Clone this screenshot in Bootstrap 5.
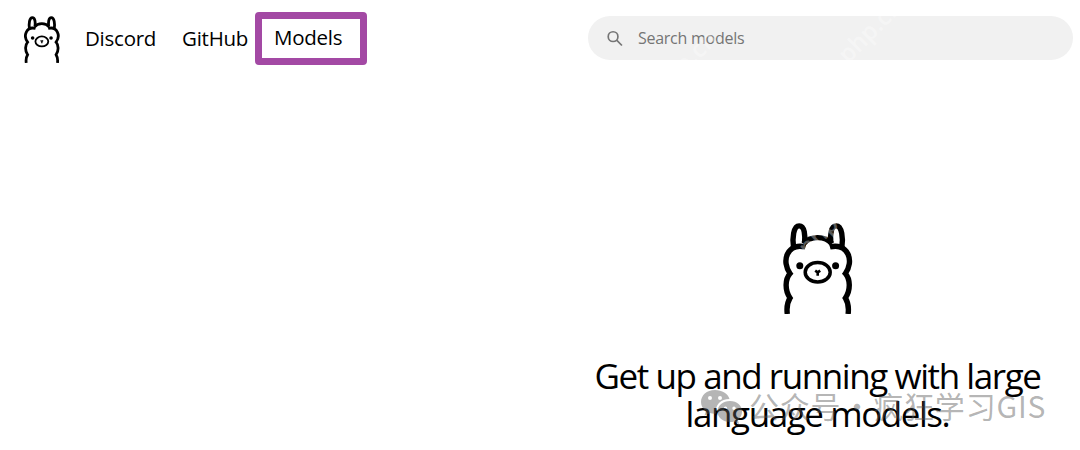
<!DOCTYPE html>
<html lang="en">
<head>
    <meta charset="UTF-8">
    <meta name="viewport" content="width=device-width, initial-scale=1">
    <title>Ollama</title>
    <link href="https://cdn.jsdelivr.net/npm/bootstrap@5.3.0/dist/css/bootstrap.min.css" rel="stylesheet">
    <style>
        body { font-family: "Open Sans", "Noto Sans CJK SC", sans-serif; color: #000; background: #fff; height: 450px; overflow: hidden; }
        .topbar { height: 76px; padding: 0 7px 0 24px; }
        .brand-logo { width: 36px; height: 47px; margin: 3px 25px 0 0; }
        .top-link { color: #000; font-size: 20.5px; line-height: 28px; letter-spacing: -.25px; white-space: nowrap; text-decoration: none; }
        .link-discord { width: 97px; margin-top: -1px; }
        .link-github { width: 73px; margin-top: -1px; }
        .link-models { width: 112px; height: 53px; margin-top: 1px; border: 7px solid #a349a4; border-radius: 4px; padding: 4px 0 0 12px; }
        .search-box { width: 485px; height: 44px; background: #f1f1f1; padding-left: 19px; color: #757575; }
        .search-box input { font-size: 16px; color: #757575; padding: 0; margin-left: 15px; letter-spacing: -.25px; }
        .search-box input::placeholder { color: #757575; opacity: 1; }
        .hero { width: 525px; padding-top: 147px; }
        .hero-logo { width: 70px; height: 91px; }
        .hero h1 { font-size: 35px; line-height: 38px; font-weight: 400; margin: 43px 0 0; white-space: nowrap; letter-spacing: -1.43px; }
        .account-mark { left: 700px; top: 385px; color: rgba(90, 90, 90, .45); font: 30px/40px "Noto Sans CJK SC", sans-serif; letter-spacing: .8px; word-spacing: -7px; white-space: nowrap; pointer-events: none; }
        .account-mark svg { width: 43px; height: 37px; margin: 2px 6px 0 0; }
        .site-mark { color: rgba(255, 255, 255, .35); font-size: 24px; line-height: 24px; font-weight: 600; transform: rotate(-45deg); pointer-events: none; }
        .mark-a { left: 830px; top: 18px; }
        .mark-b { left: 645px; top: 50px; }
        .mark-c { left: 790px; top: 211px; }
    </style>
</head>
<body class="position-relative">
    <!-- Llama outline shared by the navbar and the hero -->
    <svg class="d-none" xmlns="http://www.w3.org/2000/svg">
        <symbol id="llama" viewBox="0 0 70 91">
            <g fill="none" stroke="currentColor" stroke-width="5.4">
                <path d="M10.600 25C9 15 10.500 2.900 16.200 2.900S22.200 13 21.600 20"/>
                <path d="M58.800 25C60.400 15 58.900 2.900 53.200 2.900S47.200 13 47.800 20"/>
                <path d="M20.500 20.800C27 12.600 42.400 12.600 48.900 20.800"/>
                <path d="M22.500 24C15 22 8 24 4.500 31C1.500 37 3 45 7 50.500C2.200 56 1.500 67 7 75C4.500 79 3.400 84 4.300 91"/>
                <path d="M46.900 24C54.400 22 61.400 24 64.900 31C67.900 37 66.400 45 62.400 50.500C67.200 56 67.900 67 62.400 75C64.900 79 66 84 65.100 91"/>
                <ellipse cx="34.700" cy="49.300" rx="12.500" ry="9.700" stroke-width="3.500"/>
                <path d="M32.200 47.600L34.700 49.400L37.200 47.600M34.700 49.400V52.800" stroke-width="2.600"/>
            </g>
            <circle cx="16.800" cy="42.700" r="3.500" fill="currentColor"/>
            <circle cx="52.600" cy="42.700" r="3.500" fill="currentColor"/>
        </symbol>
    </svg>

    <header class="topbar d-flex align-items-center">
        <svg class="brand-logo flex-shrink-0"><use href="#llama"/></svg>
        <nav class="d-flex align-items-center">
            <a class="top-link link-discord" href="#">Discord</a>
            <a class="top-link link-github" href="#">GitHub</a>
            <a class="top-link link-models" href="#">Models</a>
        </nav>
        <form class="search-box rounded-pill d-flex align-items-center ms-auto">
            <svg width="17" height="17" viewBox="0 0 17 17" fill="none" stroke="currentColor" stroke-width="1.8">
                <circle cx="6.500" cy="6.500" r="5.200"/>
                <path d="M10.300 10.300L16 16"/>
            </svg>
            <input class="form-control border-0 bg-transparent shadow-none" type="text" placeholder="Search models">
        </form>
    </header>

    <main class="d-flex justify-content-end">
        <section class="hero text-center">
            <svg class="hero-logo"><use href="#llama"/></svg>
            <h1>Get up and running with large<br>language models.</h1>
        </section>
    </main>

    <div class="account-mark position-absolute d-flex align-items-center">
        <svg viewBox="0 0 43 37">
            <path fill="currentColor" fill-rule="evenodd" d="M15 2C6.500 2 1 7.500 1 14c0 4 2 7 5 9l-1.500 4.500L10 25c2 .6 4 .8 6 .6C14.500 17 21 11 29.500 11 28 5.500 22 2 15 2ZM10 8a2 2 0 1 1 0 4 2 2 0 0 1 0-4Zm10 0a2 2 0 1 1 0 4 2 2 0 0 1 0-4Z"/>
            <path fill="currentColor" fill-rule="evenodd" d="M30 13c-7 0-12.500 4.600-12.500 10.500S23 34 30 34c1.500 0 3-.2 4.300-.6L39 36l-1.200-4.200c2.700-2 4.200-4.800 4.200-8.300C42 17.600 37 13 30 13Zm-4.500 5.500a1.700 1.700 0 1 1 0 3.400 1.700 1.700 0 0 1 0-3.400Zm8.500 0a1.700 1.700 0 1 1 0 3.400 1.700 1.700 0 0 1 0-3.400Z"/>
        </svg>
        <span>公众号 · 疯狂学习GIS</span>
    </div>
    <span class="site-mark mark-a position-absolute">php.cn</span>
    <span class="site-mark mark-b position-absolute">php.cn</span>
    <span class="site-mark mark-c position-absolute">php.cn</span>

    <script src="https://cdn.jsdelivr.net/npm/bootstrap@5.3.0/dist/js/bootstrap.bundle.min.js"></script>
</body>
</html>
